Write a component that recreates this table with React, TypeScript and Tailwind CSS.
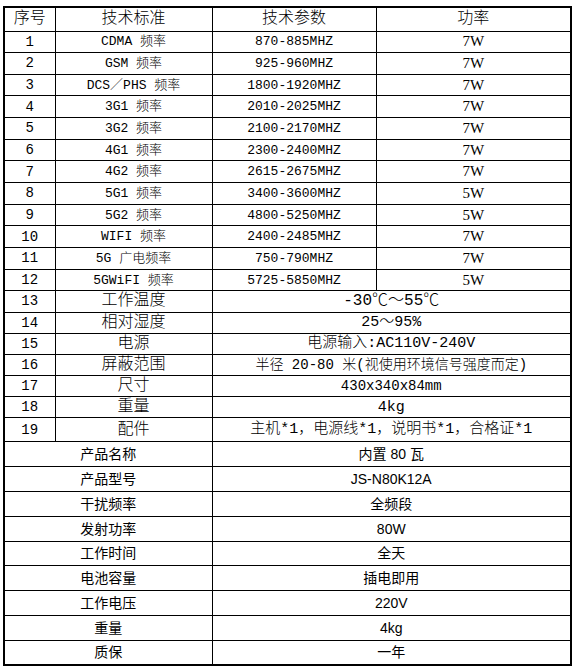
const bands = [
  ['1', 'CDMA 频率', '870-885MHZ', '7W'],
  ['2', 'GSM 频率', '925-960MHZ', '7W'],
  ['3', 'DCS／PHS 频率', '1800-1920MHZ', '7W'],
  ['4', '3G1 频率', '2010-2025MHZ', '7W'],
  ['5', '3G2 频率', '2100-2170MHZ', '7W'],
  ['6', '4G1 频率', '2300-2400MHZ', '7W'],
  ['7', '4G2 频率', '2615-2675MHZ', '7W'],
  ['8', '5G1 频率', '3400-3600MHZ', '5W'],
  ['9', '5G2 频率', '4800-5250MHZ', '5W'],
  ['10', 'WIFI 频率', '2400-2485MHZ', '7W'],
  ['11', '5G 广电频率', '750-790MHZ', '7W'],
  ['12', '5GWiFI 频率', '5725-5850MHZ', '5W'],
];

const specs = [
  ['13', '工作温度', '-30℃～55℃', 'text-[16px]'],
  ['14', '相对湿度', '25～95%', 'text-[15px]'],
  ['15', '电源', '电源输入:AC110V-240V', 'text-[15px]'],
  ['16', '屏蔽范围', '半径 20-80 米(视使用环境信号强度而定)', 'text-[14px]'],
  ['17', '尺寸', '430x340x84mm', 'text-[14px]'],
  ['18', '重量', '4kg', 'text-[15px]'],
  ['19', '配件', '主机*1，电源线*1，说明书*1，合格证*1', 'text-[15px]'],
];

const product = [
  ['产品名称', '内置 80 瓦'],
  ['产品型号', 'JS-N80K12A'],
  ['干扰频率', '全频段'],
  ['发射功率', '80W'],
  ['工作时间', '全天'],
  ['电池容量', '插电即用'],
  ['工作电压', '220V'],
  ['重量', '4kg'],
  ['质保', '一年'],
];

// SimSun-ish look: mono latin + thin CJK
const song = "font-['Liberation_Mono','Noto_Sans_CJK_SC',monospace] font-light";
const hei = "font-['Liberation_Sans','Noto_Sans_CJK_SC',sans-serif]";
const cell = 'border border-black p-0 text-center align-middle leading-none whitespace-nowrap';

export default function App() {
  return (
    <div className="bg-white w-[574px] h-[669px] pt-[6px] pl-[3px]">
      <table className="table-fixed border-collapse w-[567px] border-2 border-black text-black">
        <colgroup>
          <col className="w-[51px]" />
          <col className="w-[157px]" />
          <col className="w-[164px]" />
          <col className="w-[195px]" />
        </colgroup>
        <tbody>
          <tr className="h-[24px]">
            <td className={`${cell} ${song} text-[16px]`}>序号</td>
            <td className={`${cell} ${song} text-[16px]`}>技术标准</td>
            <td className={`${cell} ${song} text-[16px]`}>技术参数</td>
            <td className={`${cell} ${song} text-[16px]`}>功率</td>
          </tr>
          {bands.map(([no, name, freq, power]) => (
            <tr key={no} className="h-[21.67px]">
              <td className={`${cell} ${song} text-[14px]`}>{no}</td>
              <td className={`${cell} ${song} text-[13px]`}>{name}</td>
              <td className={`${cell} ${song} text-[13px]`}>{freq}</td>
              <td className={`${cell} font-['Liberation_Serif',serif] text-[15px]`}>{power}</td>
            </tr>
          ))}
          {specs.map(([no, label, value, size]) => (
            <tr key={no} className={no === '19' ? 'h-[24px]' : 'h-[21.17px]'}>
              <td className={`${cell} ${song} text-[14px]`}>{no}</td>
              <td className={`${cell} ${song} text-[16px]`}>{label}</td>
              <td colSpan={2} className={`${cell} ${song} ${size}`}>{value}</td>
            </tr>
          ))}
          {product.map(([label, value]) => (
            <tr key={label} className="h-[24.8px]">
              <td colSpan={2} className={`${cell} ${hei} text-[14px]`}>{label}</td>
              <td colSpan={2} className={`${cell} ${hei} text-[14px]`}>{value}</td>
            </tr>
          ))}
        </tbody>
      </table>
    </div>
  );
}
